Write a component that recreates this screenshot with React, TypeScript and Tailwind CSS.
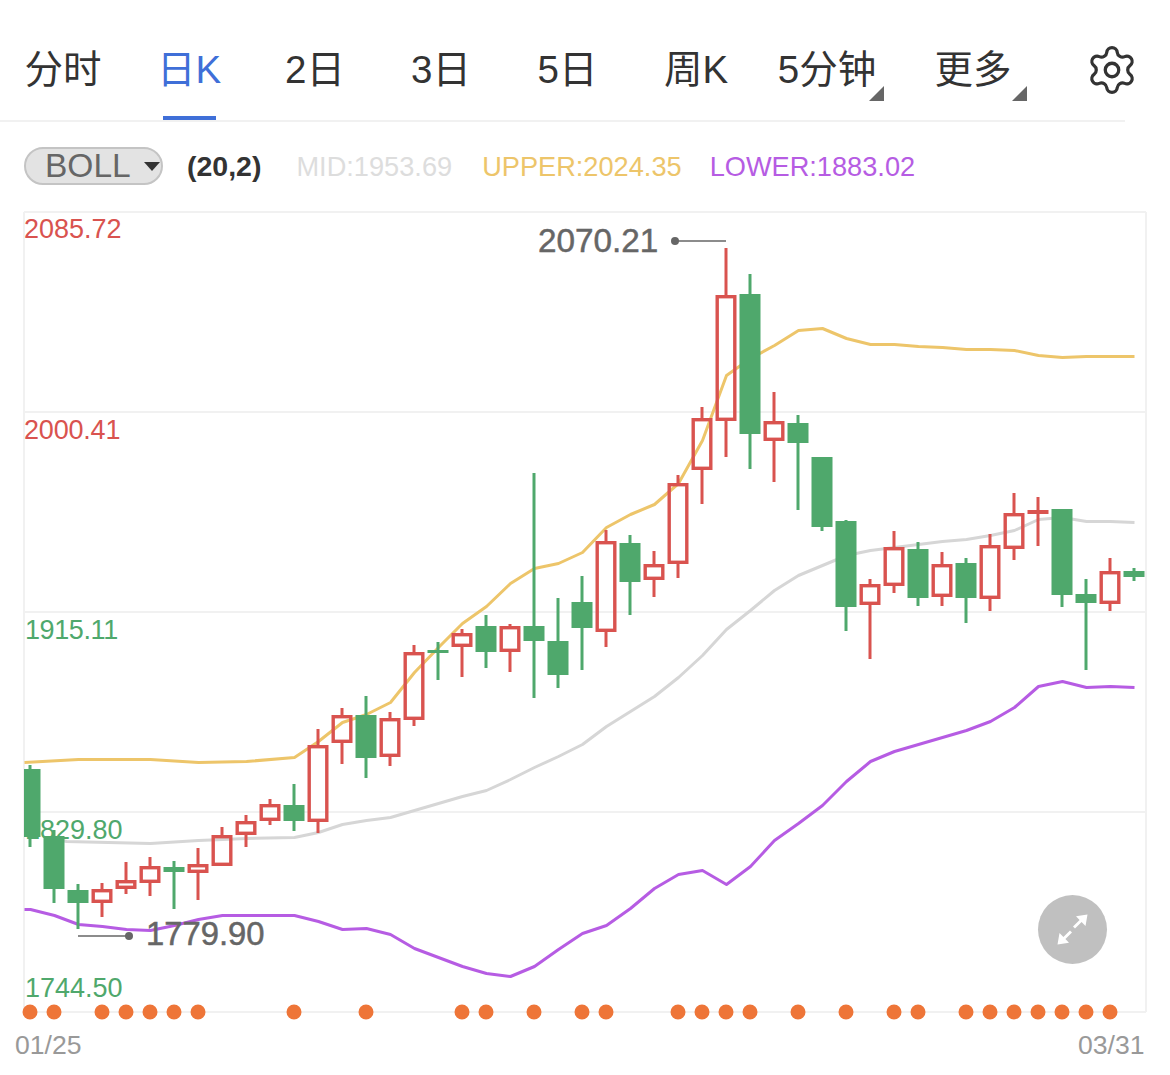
import { Settings } from "lucide-react";

type C = [number, "r" | "g", number, number, number, number];
const candles: C[] = [
  [30,"g",765,769,837,847],[54,"g",830,836,889,903],[78,"g",884,890,903,929],[102,"r",883,889,903,917],
  [126,"r",862,880,889,894],[150,"r",857,866,883,896],[174,"g",861,867,872,909],[198,"r",848,864,873,900],
  [222,"r",827,835,866,866],[246,"r",815,821,835,847],[270,"r",799,804,821,825],[294,"g",784,805,821,831],
  [318,"r",729,745,822,833],[342,"r",708,715,743,764],[366,"g",696,715,758,778],[390,"r",712,718,757,766],
  [414,"r",645,652,720,726],[438,"g",642,650,653,680],[462,"r",629,633,647,677],[486,"g",615,626,652,668],
  [510,"r",624,626,652,672],[534,"g",473,626,641,698],[558,"g",598,641,675,688],[582,"g",576,602,628,670],
  [606,"r",530,541,632,647],[630,"g",535,543,582,615],[654,"r",551,564,580,597],[678,"r",475,483,564,578],
  [702,"r",407,418,470,504],[726,"r",248,295,421,457],[750,"g",274,294,434,469],[774,"r",392,421,441,482],
  [798,"g",415,423,443,510],[822,"g",457,457,527,531],[846,"g",520,521,607,631],[870,"r",579,584,605,659],
  [894,"r",531,547,586,593],[918,"g",542,549,598,606],[942,"r",552,564,597,606],[966,"g",558,563,598,623],
  [990,"r",534,545,599,611],[1014,"r",493,513,549,560],[1038,"r",497,510,514,546],[1062,"g",509,509,595,607],
  [1086,"g",579,594,603,670],[1110,"r",558,571,604,611],[1134,"g",568,571,577,581],
];

const upper = "24,762 78,759 150,759 198,762 246,761 294,757 318,741 342,722 366,714 390,702 414,672 438,647 462,623 486,606 510,583 534,568 558,563 582,552 606,527 630,514 654,504 678,483 702,440 726,375 750,358 774,345 798,330 822,328 846,338 870,344 894,344 918,346 942,347 966,349 990,349 1014,350 1038,355 1062,357 1086,356 1110,356 1134,356";
const mid = "54,838 66,841 150,843 198,840 246,838 294,837 318,832 342,824 366,820 390,817 414,810 438,803 462,796 486,790 510,779 534,767 558,756 582,744 606,726 630,711 654,696 678,677 702,655 726,629 750,610 774,590 798,575 822,565 846,555 870,550 894,547 918,544 942,541 966,539 990,535 1014,530 1038,519 1062,517 1086,521 1110,521 1134,522";
const lower = "24,909 30,909 54,915 78,924 102,926 126,929 150,930 174,925 198,919 222,915 246,915 294,915 318,921 342,929 366,928 390,934 414,948 438,957 462,966 486,973 510,976 534,966 558,949 582,933 606,925 630,908 654,888 678,874 702,870 726,884 750,866 774,840 798,823 822,805 846,781 870,761 894,751 918,744 942,737 966,730 990,721 1014,707 1038,686 1062,681 1086,687 1110,686 1134,687";
const dots = [30,54,102,126,150,174,198,294,366,462,486,534,582,606,678,702,726,750,798,846,894,918,966,990,1014,1038,1062,1086,1110];

const RED = "#d9534f";
const GREEN = "#4fa86c";
const OY = 205;

const tabs = [
  { t: "分时", w: "w-[126px]" },
  { t: "日K", w: "w-[126px]", active: true },
  { t: "2日", w: "w-[126px]" },
  { t: "3日", w: "w-[126px]" },
  { t: "5日", w: "w-[127px]" },
  { t: "周K", w: "w-[130px]" },
  { t: "5分钟", w: "w-[132px]", corner: "right-[-8px]" },
  { t: "更多", w: "w-[160px]", corner: "right-[-15px]" },
];

export default function App() {
  return (
    <div className="relative w-[1170px] h-[1075px] bg-white overflow-hidden font-['Liberation_Sans','Noto_Sans_CJK_SC',sans-serif]">
      <div className="flex h-[122px] w-[1125px] border-b-2 border-[#f1f1f1] pt-[45px]">
        {tabs.map((x, i) => (
          <div key={i} className={`${x.w} shrink-0 flex justify-center`}>
            <div className={`relative h-[75px] text-[38.5px] leading-[50px] ${x.active ? "text-[#3f6fd8] border-b-4 border-[#3f6fd8] w-[53px] flex justify-center whitespace-nowrap" : "text-[#333333]"}`}>
              {x.t}
              {x.corner && (
                <span className={`absolute ${x.corner} bottom-[19px] w-0 h-0 border-l-[15px] border-l-transparent border-b-[15px] border-b-[#666666]`} />
              )}
            </div>
          </div>
        ))}
        <Settings size={54} strokeWidth={1.45} className="text-[#333333] -mt-[2px] ml-[32px] shrink-0" />
      </div>

      <div className="flex items-center h-[38px] mt-[25px] ml-[24px] text-[27.2px] leading-none whitespace-nowrap">
        <div className="flex items-center justify-between w-[139px] h-[38px] rounded-[19px] border-2 border-[#c4c4c4] bg-[#e3e3e3] pl-[19px] pr-[1px]">
          <span className="text-[33.5px] text-[#666666]">BOLL</span>
          <span className="w-0 h-0 border-x-[8px] border-x-transparent border-t-[9px] border-t-[#333333]" />
        </div>
        <span className="ml-[24px] text-[#333333] font-bold text-[28.5px]">(20,2)</span>
        <span className="ml-[35px] pt-[2px] text-[#dddddd]">MID:1953.69</span>
        <span className="ml-[30px] pt-[2px] text-[#edc56a]">UPPER:2024.35</span>
        <span className="ml-[28px] pt-[2px] text-[#b65ce3]">LOWER:1883.02</span>
      </div>

      <div className="relative mt-[20px] h-[870px]">
        <svg width={1170} height={870} viewBox={`0 ${OY} 1170 870`} className="block" fontFamily="'Liberation Sans',sans-serif">
          {[212, 412, 612, 812, 1012].map((y) => (
            <line key={y} x1={24} x2={1146} y1={y} y2={y} stroke="#f1f1f1" strokeWidth={2} />
          ))}
          <line x1={24} x2={24} y1={212} y2={1012} stroke="#f1f1f1" strokeWidth={2} />
          <line x1={1146} x2={1146} y1={212} y2={1012} stroke="#f1f1f1" strokeWidth={2} />

          <g fontSize={27}>
            <text x={24} y={238} fill={RED}>2085.72</text>
            <text x={24} y={439} fill={RED} letterSpacing={-0.2}>2000.41</text>
            <text x={25} y={639} fill={GREEN} letterSpacing={-0.4}>1915.11</text>
            <text x={25} y={839} fill={GREEN}>1829.80</text>
            <text x={25} y={997} fill={GREEN}>1744.50</text>
          </g>

          <g fill="none" strokeWidth={3} strokeLinejoin="round" transform="translate(0.5 0.5)">
            <polyline points={mid} stroke="#d6d6d6" />
            <polyline points={upper} stroke="#edc56a" />
            <polyline points={lower} stroke="#b65ce3" />
          </g>

          {candles.map(([x, c, hi, top, bot, lo]) => {
            const col = c === "r" ? RED : GREEN;
            const left = Math.max(x - 10.5, 24);
            const solid = c === "g" || bot - top < 6;
            return (
              <g key={x}>
                {hi < top && <line x1={x} x2={x} y1={hi} y2={top} stroke={col} strokeWidth={3} />}
                {lo > bot && <line x1={x} x2={x} y1={bot} y2={lo} stroke={col} strokeWidth={3} />}
                {solid ? (
                  <rect x={left} y={top} width={x + 10.5 - left} height={bot - top} fill={col} />
                ) : (
                  <rect x={x - 8.8} y={top + 1.7} width={17.6} height={bot - top - 3.4} fill="none" stroke={col} strokeWidth={3.4} />
                )}
              </g>
            );
          })}

          {dots.map((x) => (
            <circle key={x} cx={x} cy={1012} r={7.5} fill="#ee7538" />
          ))}

          <line x1={675} x2={726} y1={241} y2={241} stroke="#666666" strokeWidth={1.5} />
          <circle cx={675} cy={241} r={4} fill="#666666" />
          <text x={538} y={252} fontSize={33.3} fill="#666666" stroke="#666666" strokeWidth={0.5}>2070.21</text>

          <line x1={78} x2={129} y1={936} y2={936} stroke="#666666" strokeWidth={1.5} />
          <circle cx={129} cy={936} r={4} fill="#666666" />
          <text x={146} y={945} fontSize={32.8} fill="#666666" stroke="#666666" strokeWidth={0.5}>1779.90</text>

          <g fontSize={26.6} fill="#999999">
            <text x={15} y={1054}>01/25</text>
            <text x={1078} y={1054}>03/31</text>
          </g>
        </svg>

        <div className="absolute left-[1038px] top-[690px] w-[69px] h-[69px] rounded-full bg-[#c0c0c0] flex items-center justify-center">
          <svg width={69} height={69} viewBox="0 0 69 69" fill="#ffffff">
            <path d="M49.5 19.5 L47.5 31 L43.6 27 L37 33.5 L35 31.5 L41.6 25 L38 21.2 Z" />
            <path d="M19.5 49.5 L21.5 38 L25.4 42 L32 35.5 L34 37.5 L27.4 44 L31 47.8 Z" />
          </svg>
        </div>
      </div>
    </div>
  );
}
